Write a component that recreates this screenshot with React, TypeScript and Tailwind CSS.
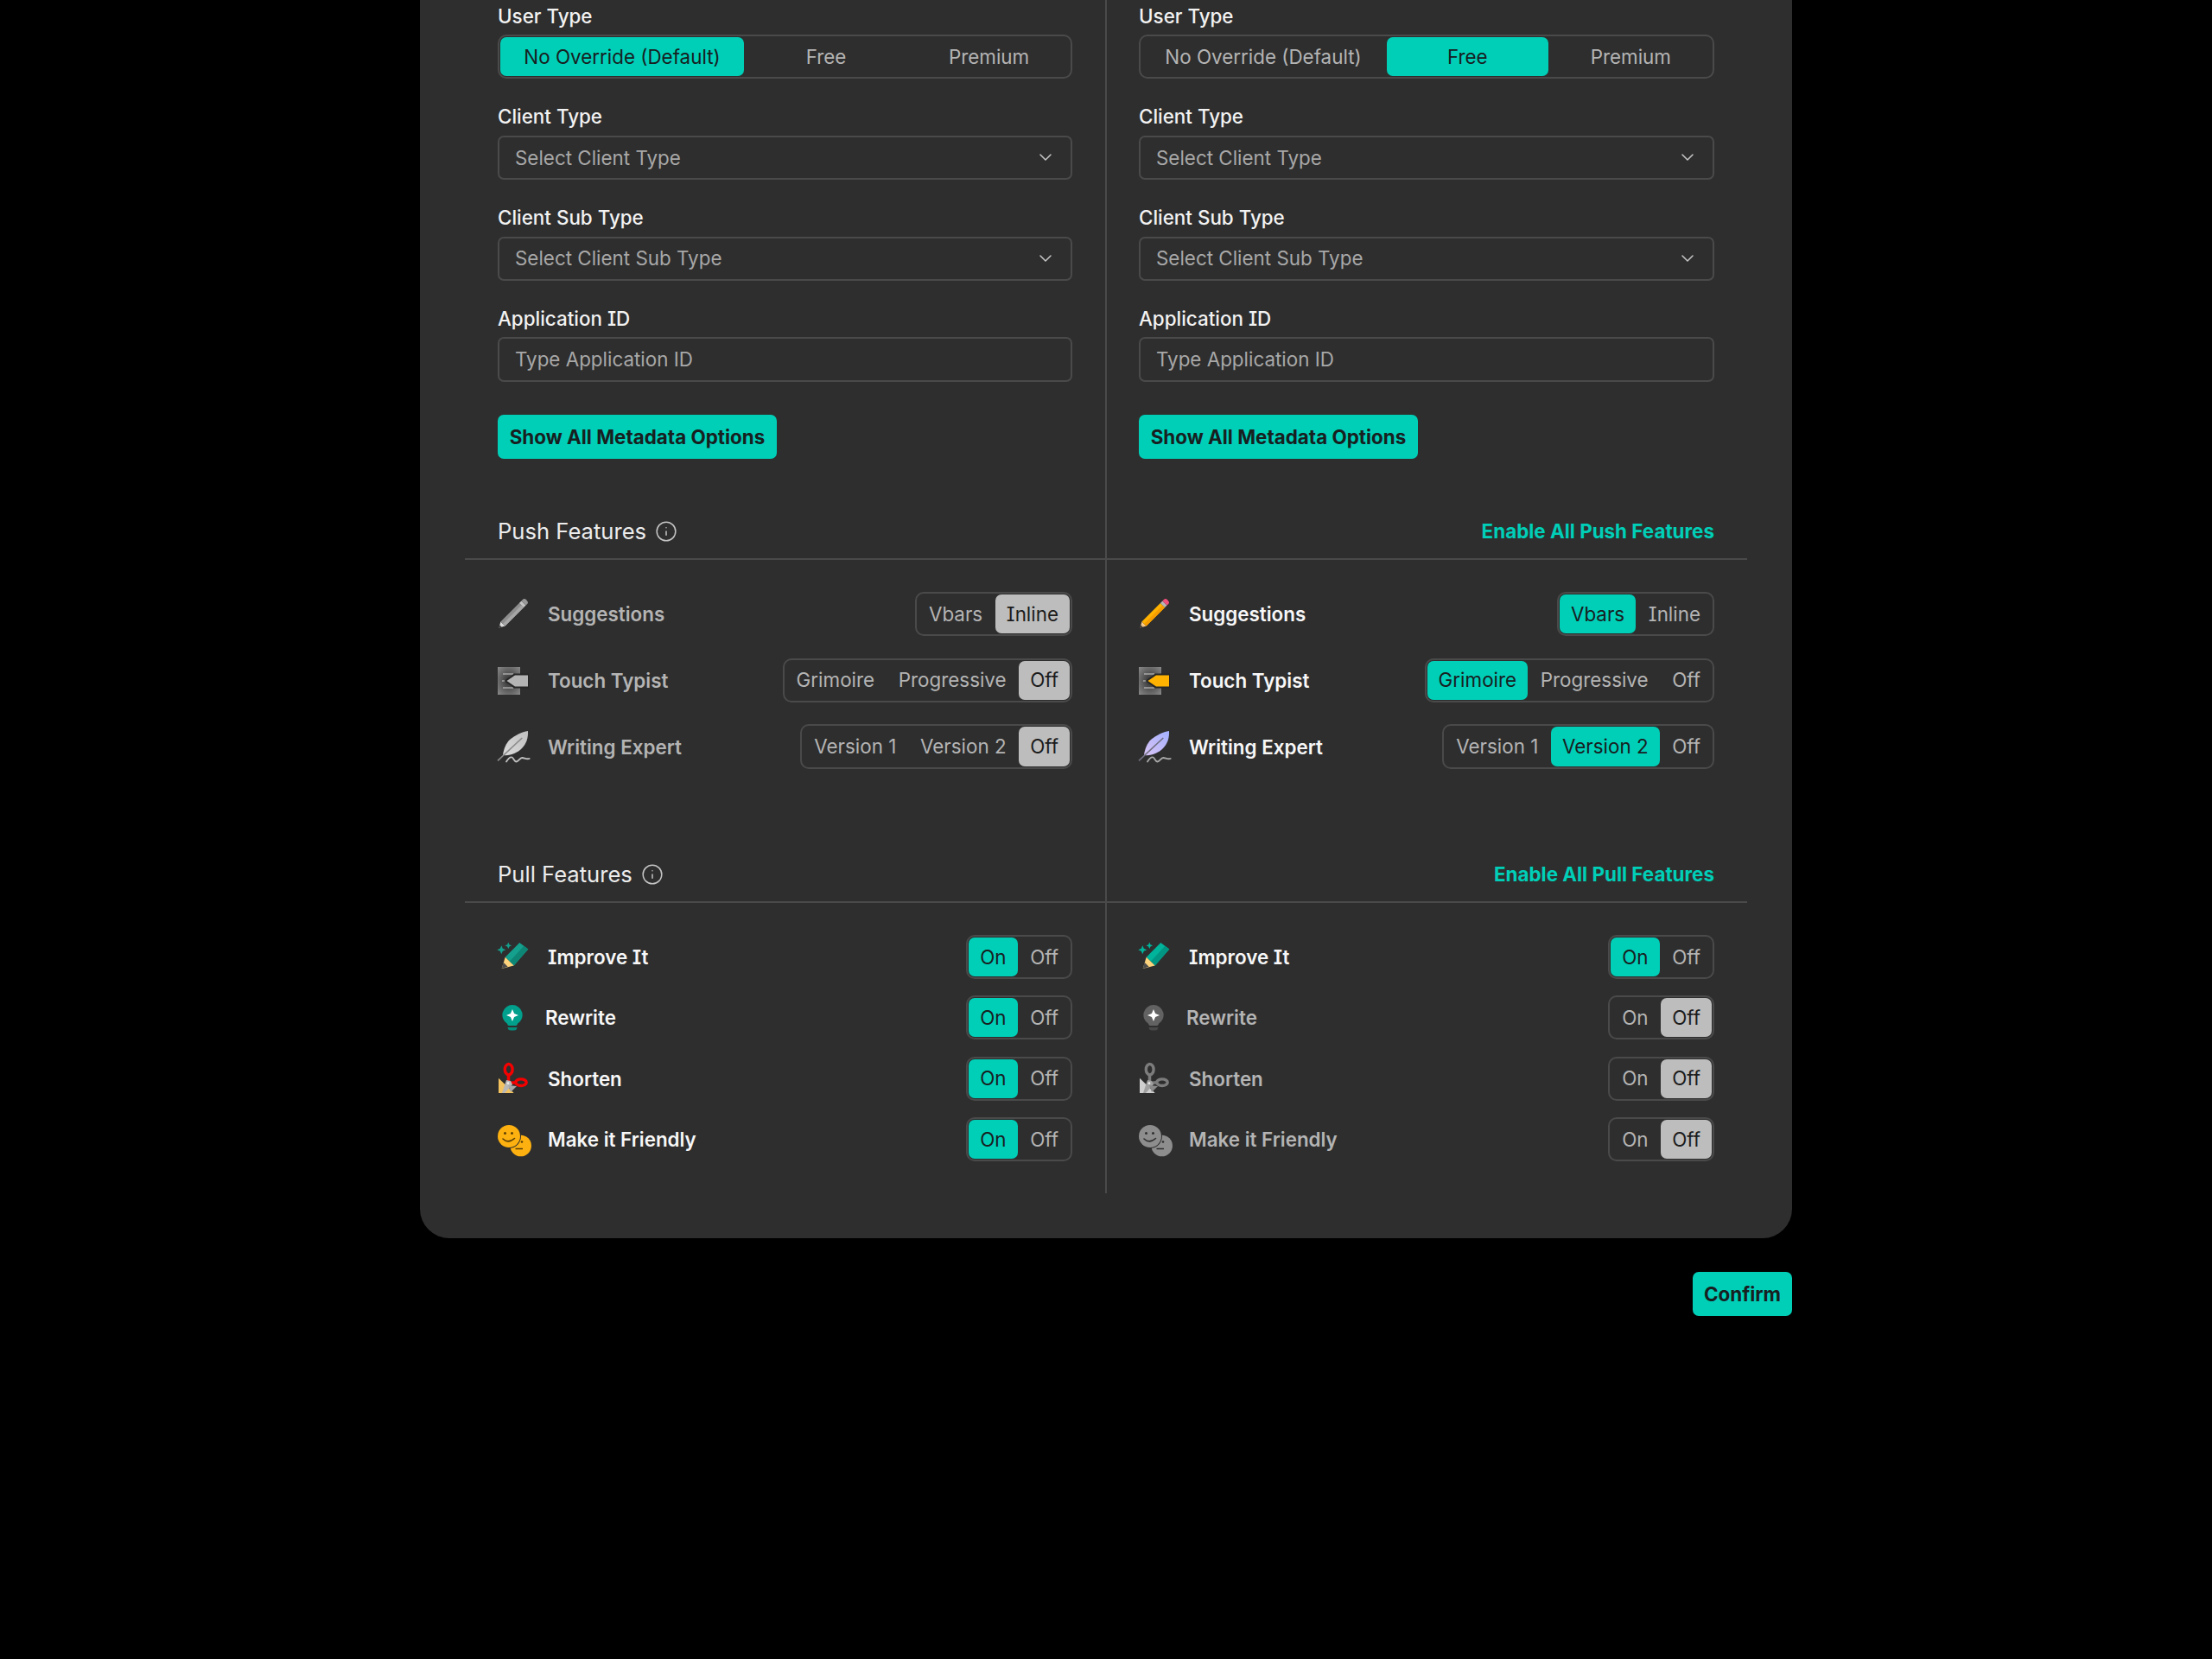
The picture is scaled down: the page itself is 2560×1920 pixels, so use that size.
import React from "react";
import { ChevronDown, Info } from "lucide-react";

function Pencil({ gray }: { gray?: boolean }) {
  return (
    <svg width="36" height="36" viewBox="0 0 36 36" className="shrink-0">
      <polygon points="1.5,34.5 3.4,27.4 8.6,32.6" fill={gray ? "#dcdcdc" : "#f8c98a"} />
      <polygon points="1.5,34.5 2.4,31.4 4.6,33.6" fill="#3a3a3a" />
      <polygon points="3.4,27.4 24.9,5.9 30.1,11.1 8.6,32.6" fill={gray ? "#8e8e8e" : "#ffb300"} />
      <polygon points="6,30 27.5,8.5 30.1,11.1 8.6,32.6" fill={gray ? "#a6a6a6" : "#f59c00"} />
      <polygon points="24.9,5.9 27.4,3.4 32.6,8.6 30.1,11.1" fill={gray ? "#c4c4c4" : "#b5b5b5"} />
      <path d="M27.4 3.4 L29.3 1.5 Q31.2 0.2 33.4 2.4 Q35.8 4.6 34.5 6.7 L32.6 8.6 Z" fill={gray ? "#999999" : "#f0507c"} />
    </svg>
  );
}

function Typist({ gray }: { gray?: boolean }) {
  const id = gray ? "tg" : "tc";
  return (
    <svg width="36" height="36" viewBox="0 0 36 36" className="shrink-0">
      <defs>
        <radialGradient id={id} cx="50%" cy="50%" r="70%">
          <stop offset="0%" stopColor="#2f2f2f" />
          <stop offset="100%" stopColor="#8a8a8a" />
        </radialGradient>
      </defs>
      <rect x="0" y="3" width="26" height="32" fill={`url(#${id})`} />
      <path d="M6 11 H18 M6 27 H18 M5 19 H10" stroke="#d0d0d0" strokeWidth="1.2" />
      <polygon points="7.5,19 19,10.5 36,10.5 36,27.5 19,27.5" fill="#262626" />
      <polygon points="10.5,19 20,12.5 35,12.5 35,25.5 20,25.5" fill={gray ? "#b4b4b4" : "#ffb300"} />
    </svg>
  );
}

function Feather({ gray }: { gray?: boolean }) {
  const id = gray ? "fg" : "fc";
  return (
    <svg width="36" height="36" viewBox="0 0 36 36" className="shrink-0 overflow-visible">
      <defs>
        <linearGradient id={id} x1="1" y1="0" x2="0" y2="1">
          <stop offset="0%" stopColor={gray ? "#c0c0c0" : "#a3b1ff"} />
          <stop offset="100%" stopColor={gray ? "#dadada" : "#d9c3f5"} />
        </linearGradient>
      </defs>
      <path d="M6 28 C7 20 10 14 14 10 C20 5 28 1 35 0 C35.5 8 33 15 28 20 C23 25 15 29 6 28 Z" fill={`url(#${id})`} />
      <path d="M0 34.3 L28.3 8" stroke={gray ? "#8a8a8a" : "#6f6f80"} strokeWidth="1.6" />
      <path d="M10 35.5 C12 32 14 29.5 16.7 30.5 C18.5 31.5 19 35.5 21.7 35.5 C24 35.5 25.5 31 28.3 31 C31 31 33 33 36.7 32" fill="none" stroke={gray ? "#c0c0c0" : "#a8a8a8"} strokeWidth="1.8" strokeLinecap="round" />
    </svg>
  );
}

function Sparkle({ x, y, r, fill }: { x: number; y: number; r: number; fill: string }) {
  const k = r * 0.3;
  return <path d={`M${x} ${y - r} L${x + k} ${y - k} L${x + r} ${y} L${x + k} ${y + k} L${x} ${y + r} L${x - k} ${y + k} L${x - r} ${y} L${x - k} ${y - k} Z`} fill={fill} />;
}

function Improve({ dim }: { dim?: boolean }) {
  return (
    <svg width="36" height="36" viewBox="0 0 36 36" className="shrink-0 overflow-visible">
      <Sparkle x={4.3} y={10.3} r={5} fill={dim ? "#14a08d" : "#00b39b"} />
      <Sparkle x={12.3} y={5.3} r={3.8} fill={dim ? "#14a08d" : "#00b39b"} />
      <polygon points="8.7,18.7 25.3,2 35.3,9.6 18.7,28.6" fill={dim ? "#14a08d" : "#00b39b"} />
      <polygon points="14,23.6 30.3,5.8 35.3,9.6 18.7,28.6" fill={dim ? "#0e8676" : "#009683"} />
      <polygon points="8.7,18.7 18.7,28.6 4.7,32" fill="#fcd27c" />
      <polygon points="6.6,24.7 11.6,29.8 4.7,32" fill="#4a4a4a" />
    </svg>
  );
}

function Bulb({ gray }: { gray?: boolean }) {
  return (
    <svg width="24" height="30" viewBox="0 0 24 30" className="shrink-0">
      <path d="M12 0 A11.7 11.7 0 0 1 18 21.7 Q17.5 24 16 24 H8 Q6.5 24 6 21.7 A11.7 11.7 0 0 1 12 0 Z" fill={gray ? "#626262" : "#00a08c"} />
      <path d="M6.5 26 H17.5 Q17 29.5 14 29.5 H10 Q7 29.5 6.5 26 Z" fill={gray ? "#484848" : "#048c7b"} />
      <Sparkle x={12} y={12} r={7} fill="#ffffff" />
    </svg>
  );
}

function Scissors({ gray }: { gray?: boolean }) {
  const ring = gray ? "#7c7c7c" : "#f50000";
  return (
    <svg width="36" height="36" viewBox="0 0 36 36" className="shrink-0 overflow-visible">
      <polygon points="1,17.7 1,35 18.7,35" fill={gray ? "#cfcfcf" : "#f3c35f"} />
      <ellipse cx="12.7" cy="7.7" rx="4.4" ry="6.2" fill="none" stroke={ring} strokeWidth="3.4" />
      <ellipse cx="27" cy="22.7" rx="6.2" ry="3.8" fill="none" stroke={ring} strokeWidth="3.4" />
      <path d="M12.5 13 L12.5 23.5 M21 22.7 L12.5 23.5" stroke={ring} strokeWidth="3.5" />
      <polygon points="10,20 15,21 17,25 8,35 5,35" fill={gray ? "#a0a0a0" : "#b8b8b8"} />
      <polygon points="12,26 22,27 15,34" fill={gray ? "#8a8a8a" : "#a8a8a8"} />
      <circle cx="12" cy="23.7" r="1.4" fill="#ececec" />
    </svg>
  );
}

function Masks({ gray }: { gray?: boolean }) {
  const f = gray ? "#8d8d8d" : "#fdb110";
  const l = gray ? "#2e2e2e" : "#5a3d05";
  return (
    <svg width="36" height="36" viewBox="0 0 36 36" className="shrink-0 overflow-visible">
      <circle cx="26.7" cy="25" r="12.3" fill={f} />
      <circle cx="28" cy="20.5" r="1.3" fill={l} />
      <path d="M20.5 28.5 H29" stroke={l} strokeWidth="1.5" />
      <circle cx="13" cy="14" r="14" fill="#2e2e2e" />
      <circle cx="13" cy="14" r="13" fill={f} />
      <circle cx="8.5" cy="10.5" r="1.5" fill={l} />
      <circle cx="16.5" cy="10.5" r="1.5" fill={l} />
      <path d="M6 17 Q12 23 19.5 16.5" fill="none" stroke={l} strokeWidth="1.6" strokeLinecap="round" />
    </svg>
  );
}

type Tone = "teal" | "gray";

function Segment({ items, active, tone, full }: { items: string[]; active: string; tone: Tone; full?: boolean }) {
  return (
    <div className={`flex h-[51.2px] items-stretch gap-[1.6px] rounded-[10px] border-2 border-[#4a4a4a] p-px ${full ? "w-full" : "w-fit"}`}>
      {items.map((it) => (
        <div
          key={it}
          className={`flex items-center justify-center rounded-[7px] px-[13px] text-[22.4px] ${full ? (it === items[0] ? "w-[282px] shrink-0" : "flex-1") : ""} ${
            it === active ? (tone === "teal" ? "bg-[#00cfb8] text-[#17201f]" : "bg-[#bdbdbd] text-[#1c1c1c]") : "text-[#b4b4b4]"
          }`}
        >
          {it}
        </div>
      ))}
    </div>
  );
}

function Label({ children, first }: { children: React.ReactNode; first?: boolean }) {
  return <div className={`mb-2 h-[28.8px] pt-[1.5px] text-[22.4px] leading-[28.8px] font-medium text-[#f2f2f2] ${first ? "" : "mt-[28.8px]"}`}>{children}</div>;
}

function SelectBox({ text }: { text: string }) {
  return (
    <div className="flex h-[51.2px] items-center justify-between rounded-[7px] border-2 border-[#4a4a4a] pr-[17px] pl-[18px] text-[22.4px] text-[#a8a8a8]">
      <span>{text}</span>
      <ChevronDown size={24} strokeWidth={1.5} color="#c8c8c8" />
    </div>
  );
}

function SectionHead({ title, link, first, left }: { title?: string; link?: string; first?: boolean; left?: boolean }) {
  return (
    <div className={`-mr-[38px] flex h-[49.6px] items-start justify-between border-b-2 border-[#4a4a4a] pt-px pr-[38px] ${left ? "-ml-[38px] pl-[38px]" : "-ml-[37px] pl-[37px]"} ${first ? "mt-[67.2px]" : "mt-[105.6px]"}`}>
      {title ? (
        <div className="flex h-8 items-center gap-[10px] text-[25.6px] leading-8 text-[#ececec]">
          {title}
          <Info size={26} strokeWidth={1.4} color="#c4c4c4" />
        </div>
      ) : (
        <div className="flex h-8 w-full items-center justify-end text-[22.4px] font-bold text-[#00cfb8]">{link}</div>
      )}
    </div>
  );
}

function FeatureRow({ icon, name, on, control }: { icon: React.ReactNode; name: string; on: boolean; control: React.ReactNode }) {
  return (
    <div className="flex h-[51.2px] items-center justify-between">
      <div className={`flex items-center gap-[22px] text-[22.4px] font-semibold ${on ? "text-[#f7f7f7]" : "text-[#b4b4b4]"}`}>
        {icon}
        <span className="pt-px">{name}</span>
      </div>
      {control}
    </div>
  );
}

function Col({ left }: { left: boolean }) {
  const seg = (items: string[], active: string) => <Segment items={items} active={active} tone={active === "Off" || active === "Inline" ? "gray" : "teal"} />;
  const onOff = ["On", "Off"];
  return (
    <div className={`pt-[3.2px] pr-[38px] pb-[36.4px] ${left ? "border-r-2 border-[#4a4a4a] pl-[38px]" : "pl-[37px]"}`}>
      <Label first>User Type</Label>
      <Segment full items={["No Override (Default)", "Free", "Premium"]} active={left ? "No Override (Default)" : "Free"} tone="teal" />
      <Label>Client Type</Label>
      <SelectBox text="Select Client Type" />
      <Label>Client Sub Type</Label>
      <SelectBox text="Select Client Sub Type" />
      <Label>Application ID</Label>
      <input
        readOnly
        placeholder="Type Application ID"
        className="block h-[51.2px] w-full rounded-[7px] border-2 border-[#4a4a4a] bg-transparent px-[18px] text-[22.4px] [font-feature-settings:normal] outline-none placeholder:text-[#a8a8a8]"
      />
      <button className="mt-[38.4px] block h-[51.2px] w-[323px] rounded-[7px] bg-[#00cfb8] text-[22.4px] font-bold text-[#17201f]">Show All Metadata Options</button>

      {left ? <SectionHead first left title="Push Features" /> : <SectionHead first link="Enable All Push Features" />}
      <div className="mt-[37px] flex flex-col gap-[25.6px]">
        <FeatureRow icon={<Pencil gray={left} />} name="Suggestions" on={!left} control={seg(["Vbars", "Inline"], left ? "Inline" : "Vbars")} />
        <FeatureRow icon={<Typist gray={left} />} name="Touch Typist" on={!left} control={seg(["Grimoire", "Progressive", "Off"], left ? "Off" : "Grimoire")} />
        <FeatureRow icon={<Feather gray={left} />} name="Writing Expert" on={!left} control={seg(["Version 1", "Version 2", "Off"], left ? "Off" : "Version 2")} />
      </div>

      {left ? <SectionHead left title="Pull Features" /> : <SectionHead link="Enable All Pull Features" />}
      <div className="mt-[37px] flex flex-col gap-[19.2px]">
        <FeatureRow icon={<Improve dim={left} />} name="Improve It" on control={seg(onOff, "On")} />
        <FeatureRow
          icon={
            <div className="flex w-[33px] justify-center">
              <Bulb gray={!left} />
            </div>
          }
          name="Rewrite"
          on={left}
          control={seg(onOff, left ? "On" : "Off")}
        />
        <FeatureRow icon={<Scissors gray={!left} />} name="Shorten" on={left} control={seg(onOff, left ? "On" : "Off")} />
        <FeatureRow icon={<Masks gray={!left} />} name="Make it Friendly" on={left} control={seg(onOff, left ? "On" : "Off")} />
      </div>
    </div>
  );
}

export default function App() {
  return (
    <div className="min-h-[1920px] bg-black [font-family:Inter,'Liberation_Sans',sans-serif] [font-feature-settings:'cv08']">
      <div className="mx-auto flex w-[1588px] flex-col items-end">
        <div className="w-full rounded-b-[34px] bg-[#2e2e2e] px-[52px] pb-[52px]">
          <div className="grid grid-cols-[743px_741px]">
            <Col left />
            <Col left={false} />
          </div>
        </div>
        <button className="mt-[39px] h-[51px] w-[115px] rounded-[7px] bg-[#00cfb8] pt-px text-[22.4px] font-bold text-[#17201f]">Confirm</button>
      </div>
    </div>
  );
}
